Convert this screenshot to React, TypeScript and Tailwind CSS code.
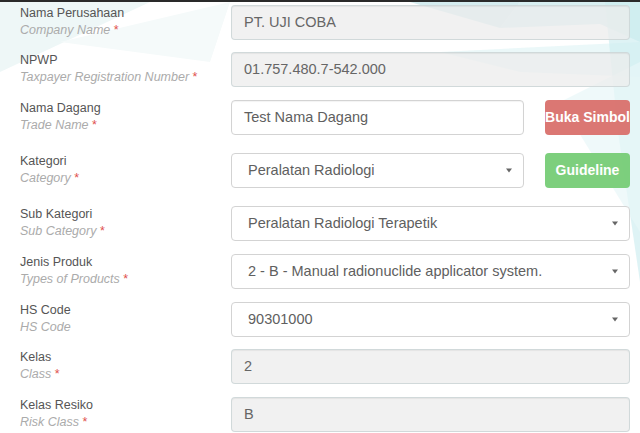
import React from 'react';

type Field = {
  label: string;
  sub: string;
  required?: boolean;
  value: string;
  kind: 'readonly' | 'text' | 'select';
  button?: { text: string; className: string };
  gap: string;
};

const fields: Field[] = [
  { label: 'Nama Perusahaan', sub: 'Company Name', required: true, value: 'PT. UJI COBA', kind: 'readonly', gap: 'mb-[12px]' },
  { label: 'NPWP', sub: 'Taxpayer Registration Number', required: true, value: '01.757.480.7-542.000', kind: 'readonly', gap: 'mb-[13px]' },
  {
    label: 'Nama Dagang', sub: 'Trade Name', required: true, value: 'Test Nama Dagang', kind: 'text', gap: 'mb-[18px]',
    button: { text: 'Buka Simbol', className: 'bg-[#d9706c]/95' },
  },
  {
    label: 'Kategori', sub: 'Category', required: true, value: 'Peralatan Radiologi', kind: 'select', gap: 'mb-[18px]',
    button: { text: 'Guideline', className: 'bg-[#76cc76]/95' },
  },
  { label: 'Sub Kategori', sub: 'Sub Category', required: true, value: 'Peralatan Radiologi Terapetik', kind: 'select', gap: 'mb-[13px]' },
  { label: 'Jenis Produk', sub: 'Types of Products', required: true, value: '2 - B - Manual radionuclide applicator system.', kind: 'select', gap: 'mb-[13px]' },
  { label: 'HS Code', sub: 'HS Code', value: '90301000', kind: 'select', gap: 'mb-[12px]' },
  { label: 'Kelas', sub: 'Class', required: true, value: '2', kind: 'readonly', gap: 'mb-[13px]' },
  { label: 'Kelas Resiko', sub: 'Risk Class', required: true, value: 'B', kind: 'readonly', gap: 'mb-[13px]' },
];

const Caret = () => (
  <svg width="6" height="5" viewBox="0 0 6 5" className="shrink-0">
    <path d="M0 0.5 H6 L3 4.5 Z" fill="#666" />
  </svg>
);

const Control: React.FC<{ f: Field }> = ({ f }) => {
  if (f.kind === 'readonly') {
    return (
      <div className="flex-1 h-[35px] flex items-center px-3 rounded-[4px] border border-[#c9d3d4]/80 bg-[#ececec]/75 shadow-[inset_0_1px_1px_rgba(0,0,0,0.06)] text-[14.5px] text-[#666]">
        {f.value}
      </div>
    );
  }
  if (f.kind === 'select') {
    return (
      <div className="flex-1 h-[35px] flex items-center justify-between pl-4 pr-[11px] rounded-[4px] border border-[#d3d3d3] bg-white/90 text-[14.5px] text-[#606060]">
        <span>{f.value}</span>
        <Caret />
      </div>
    );
  }
  return (
    <div className="flex-1 h-[35px] flex items-center px-3 rounded-[4px] border border-[#d3d3d3] bg-white/90 shadow-[inset_0_1px_1px_rgba(0,0,0,0.05)] text-[14.5px] text-[#606060]">
      {f.value}
    </div>
  );
};

export default function App() {
  return (
    <div
      className="relative w-[640px] h-[433px] overflow-hidden bg-white border-t-2 border-[#2a2a2a]"
      style={{ fontFamily: '"Liberation Sans", Arial, sans-serif' }}
    >
      {/* faint polygon backdrop */}
      <svg className="absolute inset-0 pointer-events-none" width="640" height="433" viewBox="0 0 640 433">
        <polygon points="0,0 150,0 0,70" fill="#eef7f7" />
        <polygon points="60,40 230,0 210,60" fill="#f5fafa" />
        <polygon points="410,0 520,0 500,26" fill="#a9dadf" opacity="0.5" />
        <polygon points="500,26 520,0 640,0 640,40 600,22" fill="#b8e2e6" opacity="0.55" />
        <polygon points="440,50 640,40 640,75 520,70" fill="#e3f5f6" opacity="0.7" />
        <polygon points="605,0 640,0 640,280 618,130" fill="#cdedf0" opacity="0.65" />
        <polygon points="560,100 640,60 640,230" fill="#e8f7f8" opacity="0.7" />
      </svg>

      <div className="relative pt-[3px] pl-5 pr-[10px]">
        {fields.map((f) => (
          <div key={f.label} className={`flex items-start ${f.gap}`}>
            <div className="w-[211px] shrink-0">
              <div className="text-[12.5px] leading-[16px] text-[#555]">{f.label}</div>
              <div className="text-[12.5px] leading-[18px] italic text-[#ababab]">
                {f.sub}
                {f.required && <span className="not-italic text-[#e0504c]"> *</span>}
              </div>
            </div>
            <Control f={f} />
            {f.button && (
              <div
                className={`ml-[21px] w-[85px] h-[35px] shrink-0 flex items-center justify-center rounded-[4px] text-white font-bold text-[14px] whitespace-nowrap ${f.button.className}`}
              >
                {f.button.text}
              </div>
            )}
          </div>
        ))}
      </div>
    </div>
  );
}
